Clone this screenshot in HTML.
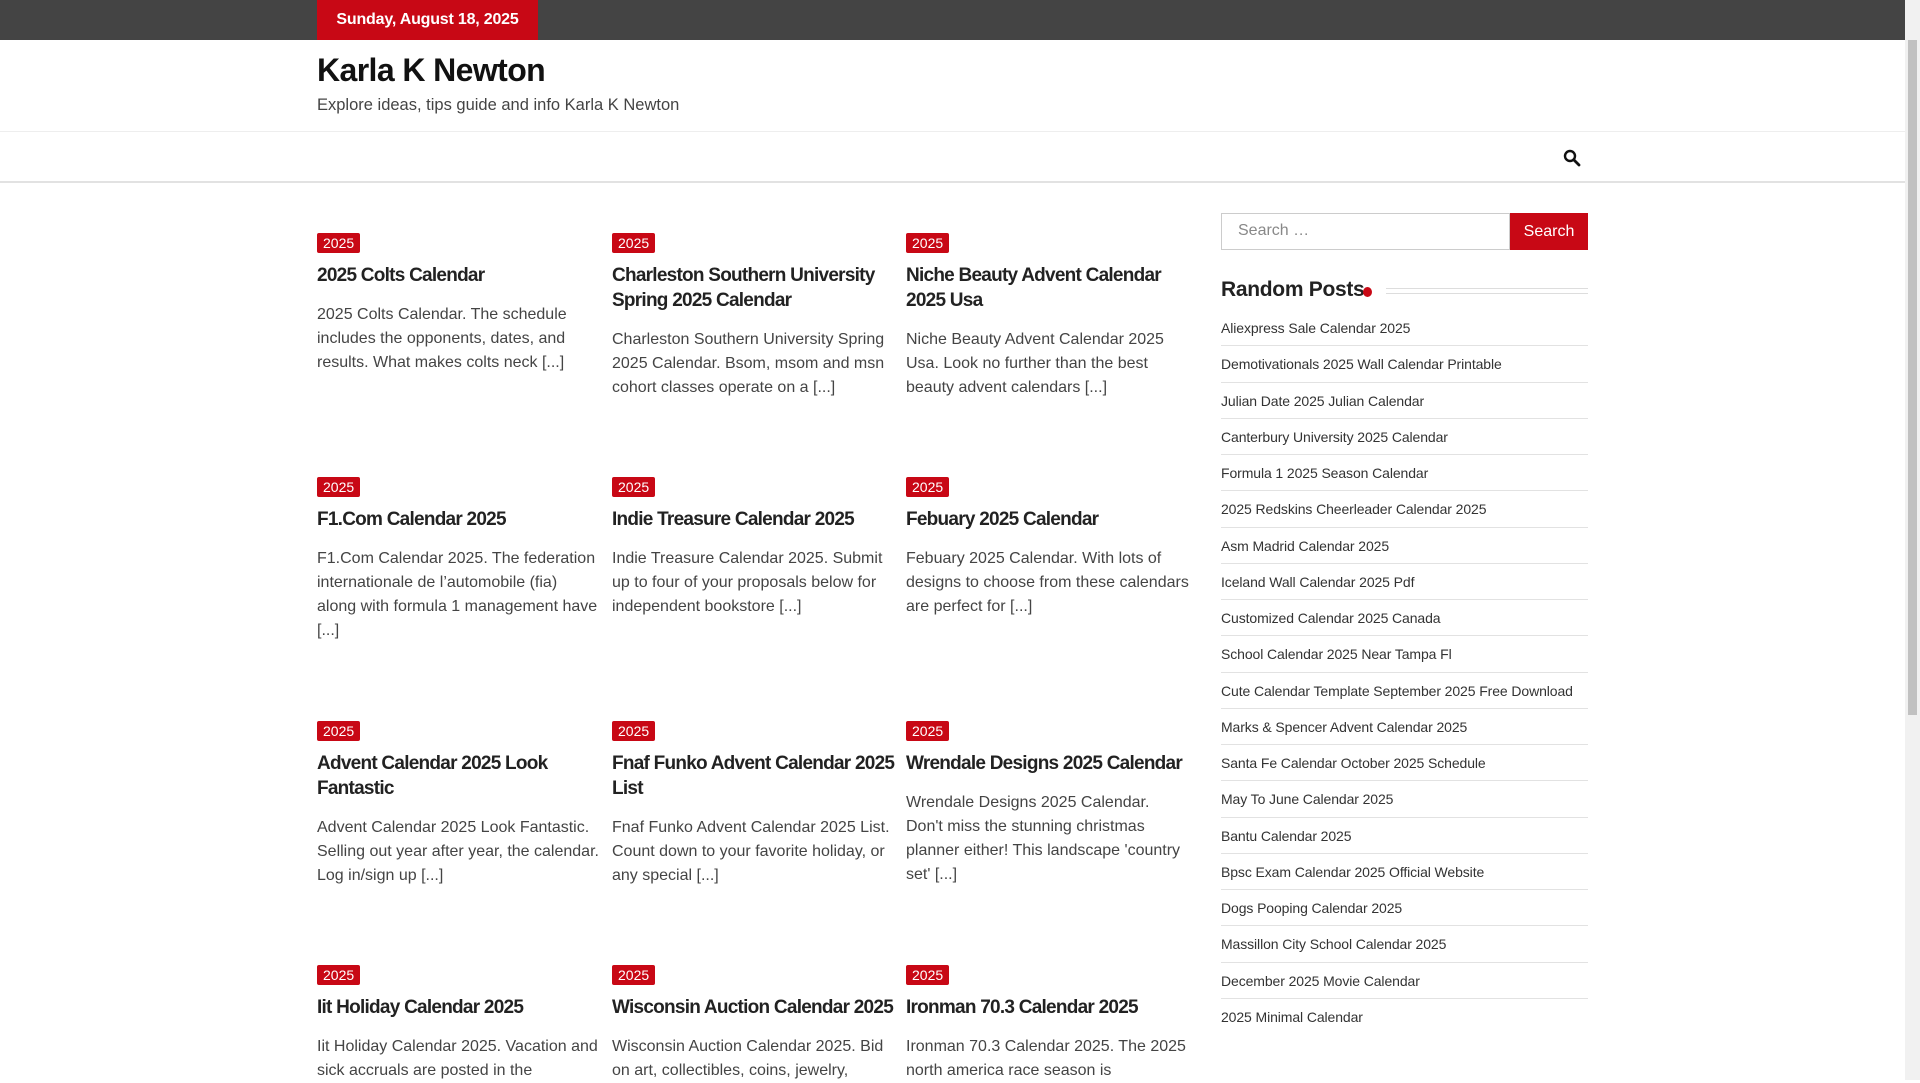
<!DOCTYPE html>
<html><head><meta charset="utf-8"><style>
*{margin:0;padding:0;box-sizing:border-box}
body{width:1920px;height:1080px;overflow:hidden;background:#fff;font-family:"Liberation Sans",sans-serif;color:#333;position:relative}
.top{height:40px;background:#444;position:relative}
.date{position:absolute;left:317px;top:0;height:40px;width:221px;background:#c80815;color:#fff;font-size:16px;line-height:40px;text-align:center;font-weight:bold;letter-spacing:-0.2px}
.title{position:absolute;left:317px;top:52px;font-size:32px;color:#111;letter-spacing:-0.6px;font-weight:bold}
.tag{position:absolute;left:317px;top:96px;font-size:16.5px;color:#444}
.l1{position:absolute;left:0;right:15px;top:131px;border-top:1px solid #eee}
.l2{position:absolute;left:0;right:15px;top:181px;border-top:2px solid #e2e2e2}
.sb{position:absolute;right:0;top:0;width:15px;height:1080px;background:#f1f1f1}
.sb i{position:absolute;left:3px;top:40px;width:9px;height:675px;background:#c1c1c1}
.post{position:absolute;width:283px}
.cat{display:inline-block;background:#c80815;color:#fff;font-size:14px;height:20px;line-height:20px;padding:0 6px;border-radius:2px}
.post h3{font-size:19px;font-weight:bold;color:#222;line-height:25px;margin-top:10px;letter-spacing:-0.75px}
.post p{font-size:16px;line-height:24px;color:#444;margin-top:15px}
.sw{position:absolute;left:1221px;top:213px;width:367px;height:37px}
.sw .in{position:absolute;left:0;top:0;width:289px;height:37px;border:1px solid #ccc;font-size:16px;color:#888;padding:8px 16px}
.sw .bt{position:absolute;left:289px;top:0;width:78px;height:37px;background:#c80815;color:#fff;font-size:16px;text-align:center;line-height:37px}
.rp{position:absolute;left:1221px;top:278px;font-size:21px;color:#222;font-weight:bold;letter-spacing:-0.3px}
.dot{position:absolute;left:1363px;top:287px;width:9px;height:10px;border-radius:50%;background:#c80815}
.rl{position:absolute;left:1386px;width:202px;top:288px;height:6px;border-top:1px solid #ddd;border-bottom:1px solid #ddd}
ul{position:absolute;left:1221px;top:310px;width:367px;list-style:none}
li{height:36.25px;line-height:36px;font-size:14px;color:#333;border-bottom:1px solid #e2e2e2;white-space:nowrap;overflow:hidden;letter-spacing:-0.1px}
li:last-child{border-bottom:none}
</style></head><body>
<div class="top"><div class="date">Sunday, August 18, 2025</div></div>
<div class="title">Karla K Newton</div>
<div class="tag">Explore ideas, tips guide and info Karla K Newton</div>
<div class="l1"></div><div class="l2"></div>
<svg style="position:absolute;left:1563px;top:149px" width="18" height="18" viewBox="0 0 18 18"><circle cx="7" cy="7" r="5" fill="none" stroke="#111" stroke-width="2.4"/><path d="M11 11l5 5" stroke="#111" stroke-width="2.8" stroke-linecap="round"/></svg>

<div class="post" style="left:317px;top:233px"><span class="cat">2025</span><h3>2025 Colts Calendar</h3><p>2025 Colts Calendar. The schedule includes the opponents, dates, and results. What makes colts neck [...]</p></div>
<div class="post" style="left:612px;top:233px"><span class="cat">2025</span><h3>Charleston Southern University Spring 2025 Calendar</h3><p>Charleston Southern University Spring 2025 Calendar. Bsom, msom and msn cohort classes operate on a [...]</p></div>
<div class="post" style="left:906px;top:233px"><span class="cat">2025</span><h3>Niche Beauty Advent Calendar 2025 Usa</h3><p>Niche Beauty Advent Calendar 2025 Usa. Look no further than the best beauty advent calendars [...]</p></div>

<div class="post" style="left:317px;top:477px"><span class="cat">2025</span><h3>F1.Com Calendar 2025</h3><p>F1.Com Calendar 2025. The federation internationale de l’automobile (fia) along with formula 1 management have [...]</p></div>
<div class="post" style="left:612px;top:477px"><span class="cat">2025</span><h3>Indie Treasure Calendar 2025</h3><p>Indie Treasure Calendar 2025. Submit up to four of your proposals below for independent bookstore [...]</p></div>
<div class="post" style="left:906px;top:477px"><span class="cat">2025</span><h3>Febuary 2025 Calendar</h3><p>Febuary 2025 Calendar. With lots of designs to choose from these calendars are perfect for [...]</p></div>

<div class="post" style="left:317px;top:721px"><span class="cat">2025</span><h3>Advent Calendar 2025 Look Fantastic</h3><p>Advent Calendar 2025 Look Fantastic. Selling out year after year, the calendar. Log in/sign up [...]</p></div>
<div class="post" style="left:612px;top:721px"><span class="cat">2025</span><h3>Fnaf Funko Advent Calendar 2025 List</h3><p>Fnaf Funko Advent Calendar 2025 List. Count down to your favorite holiday, or any special [...]</p></div>
<div class="post" style="left:906px;top:721px"><span class="cat">2025</span><h3>Wrendale Designs 2025 Calendar</h3><p>Wrendale Designs 2025 Calendar. Don't miss the stunning christmas planner either! This landscape 'country set' [...]</p></div>

<div class="post" style="left:317px;top:965px"><span class="cat">2025</span><h3>Iit Holiday Calendar 2025</h3><p>Iit Holiday Calendar 2025. Vacation and sick accruals are posted in the</p></div>
<div class="post" style="left:612px;top:965px"><span class="cat">2025</span><h3>Wisconsin Auction Calendar 2025</h3><p>Wisconsin Auction Calendar 2025. Bid on art, collectibles, coins, jewelry,</p></div>
<div class="post" style="left:906px;top:965px"><span class="cat">2025</span><h3>Ironman 70.3 Calendar 2025</h3><p>Ironman 70.3 Calendar 2025. The 2025 north america race season is</p></div>

<div class="sw"><div class="in">Search …</div><div class="bt">Search</div></div>
<div class="rp">Random Posts</div><div class="dot"></div><div class="rl"></div>
<ul>
<li>Aliexpress Sale Calendar 2025</li>
<li>Demotivationals 2025 Wall Calendar Printable</li>
<li>Julian Date 2025 Julian Calendar</li>
<li>Canterbury University 2025 Calendar</li>
<li>Formula 1 2025 Season Calendar</li>
<li>2025 Redskins Cheerleader Calendar 2025</li>
<li>Asm Madrid Calendar 2025</li>
<li>Iceland Wall Calendar 2025 Pdf</li>
<li>Customized Calendar 2025 Canada</li>
<li>School Calendar 2025 Near Tampa Fl</li>
<li>Cute Calendar Template September 2025 Free Download</li>
<li>Marks &amp; Spencer Advent Calendar 2025</li>
<li>Santa Fe Calendar October 2025 Schedule</li>
<li>May To June Calendar 2025</li>
<li>Bantu Calendar 2025</li>
<li>Bpsc Exam Calendar 2025 Official Website</li>
<li>Dogs Pooping Calendar 2025</li>
<li>Massillon City School Calendar 2025</li>
<li>December 2025 Movie Calendar</li>
<li>2025 Minimal Calendar</li>
</ul>
<div class="sb"><i></i></div>
</body></html>
